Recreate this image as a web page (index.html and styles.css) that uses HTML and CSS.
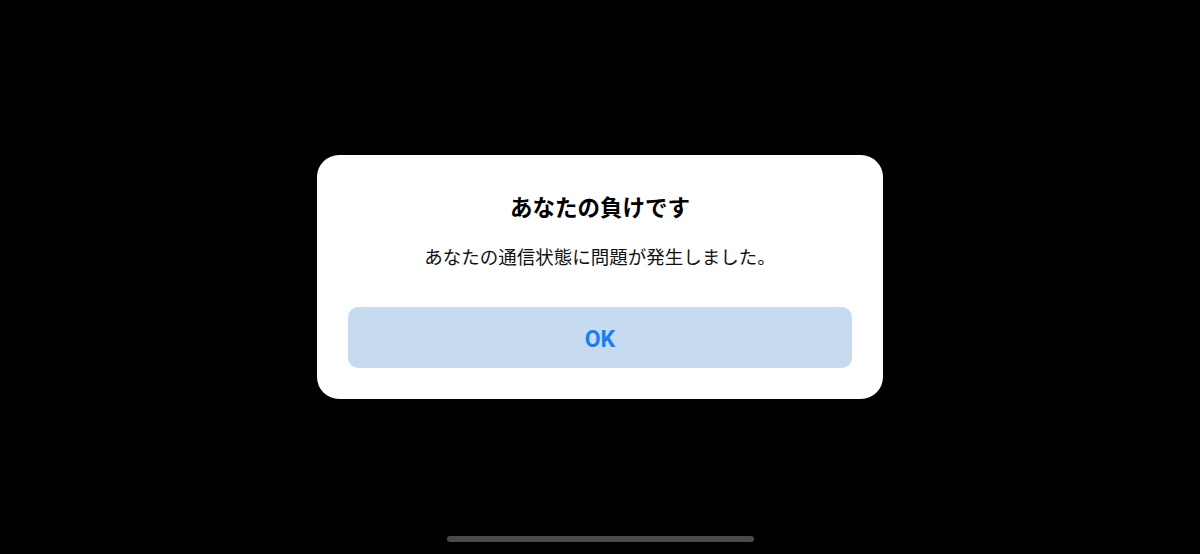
FILE: index.html
```html
<!DOCTYPE html>
<html lang="ja">
<head>
<meta charset="UTF-8">
<meta name="viewport" content="width=device-width, initial-scale=1.0">
<title>あなたの負けです</title>
<link rel="stylesheet" href="styles.css">
</head>
<body>
<div id="screen">
    <div class="dialog">
        <h1 class="dialog-title">あなたの負けです</h1>
        <p class="dialog-message">あなたの通信状態に問題が発生しました。</p>
        <button class="dialog-button">OK</button>
    </div>
    <div class="home-indicator"></div>
</div>
</body>
</html>
```

FILE: styles.css
```css
body {
    margin: 0;
    background: #000;
    font-family: "Noto Sans CJK JP", "Noto Sans", sans-serif;
}
#screen {
    position: relative;
    height: 554px;
    display: flex;
    justify-content: center;
    align-items: center;
}
.dialog {
    width: 566px;
    box-sizing: border-box;
    background: #fff;
    border-radius: 22px;
    padding: 36px 31px 31px;
    text-align: center;
}
.dialog-title {
    margin: 0;
    font-size: 22.5px;
    line-height: 30px;
    font-weight: 700;
    color: #000;
}
.dialog-message {
    margin: 22px 0 38px;
    font-size: 18.5px;
    line-height: 26px;
    color: #111;
}
.dialog-button {
    display: block;
    width: 100%;
    height: 61px;
    padding-top: 5px;
    border: none;
    border-radius: 10px;
    background: #c6dbef;
    color: #1a7ef2;
    font-family: Roboto, "Noto Sans", sans-serif;
    font-size: 23px;
    font-weight: 700;
    cursor: pointer;
}
.home-indicator {
    position: absolute;
    left: 447px;
    bottom: 12px;
    width: 307px;
    height: 6px;
    border-radius: 3px;
    background: #4a4a4a;
}
```
